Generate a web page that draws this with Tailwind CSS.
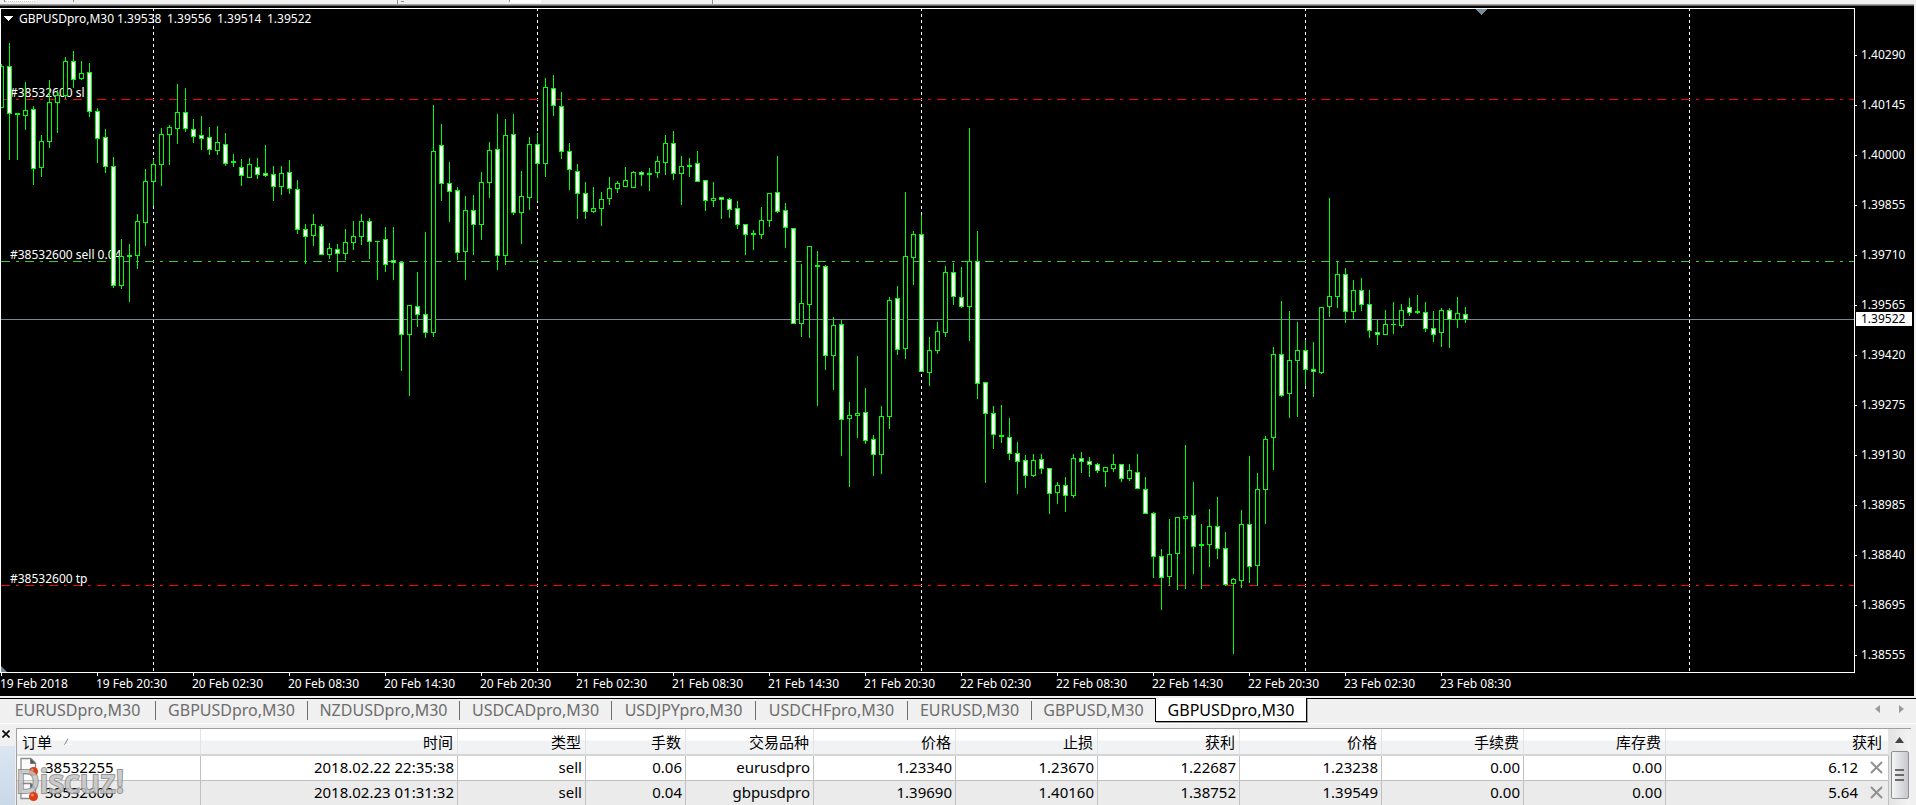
<!DOCTYPE html>
<html lang="zh-CN">
<head>
<meta charset="utf-8">
<title>GBPUSDpro,M30</title>
<script src="https://cdn.jsdelivr.net/npm/@tailwindcss/browser@4"></script>
</head>
<body class="flex h-screen flex-col overflow-hidden bg-[#f0f0f0] font-['Noto_Sans','Noto_Sans_CJK_SC',sans-serif] text-black">

<!-- lower edge of the toolbar -->
<div class="flex h-1 shrink-0 items-start bg-[#f0f0f0]">
  <span class="ml-1 h-[2px] w-px bg-[#8c8c8c]"></span>
  <span class="h-[2px] w-[30px] border-b border-dotted border-[#c8c8c8] bg-white"></span>
  <span class="ml-[38px] h-[2px] w-px bg-[#8c8c8c]"></span>
  <span class="ml-[323px] h-1 w-px bg-[#8c8c8c]"></span>
  <span class="mt-px ml-[3px] h-px w-[3px] bg-[#8c8c8c]"></span>
  <span class="ml-[105px] h-[2px] w-px bg-[#8c8c8c]"></span>
  <span class="h-[3px] w-[31px] bg-white"></span>
  <span class="ml-[171px] h-1 w-px bg-[#8c8c8c]"></span>
</div>

<!-- chart window -->
<main class="mr-[2px] flex min-h-0 flex-1 flex-col border-t border-[#a0a0a0] bg-black">
  <div class="h-[3px] shrink-0 border-t border-[#696969]"></div>
  <div class="flex min-h-0 flex-1">
    <section class="relative min-w-0 flex-1 border border-white">
      <svg id="plot" class="absolute inset-0 h-full w-full" shape-rendering="crispEdges" role="img" aria-label="GBPUSDpro M30">
        <g transform="translate(-1 -9)">
          <g id="days" stroke="#fff" stroke-dasharray="3 3"></g>
          <g stroke-dasharray="9 6 3 6">
            <path d="M1 99.500H4000" stroke="#ff0000"/>
            <path d="M1 261.500H4000" stroke="#32cd32"/>
            <path d="M1 585.500H4000" stroke="#ff0000"/>
          </g>
          <path d="M1 319.500H4000" stroke="#778899"/>
          <g class="text-[12px]" fill="#fff">
            <text x="10" y="97">#38532600 sl</text>
            <text x="10" y="259">#38532600 sell 0.04</text>
            <text x="10" y="583">#38532600 tp</text>
            <text x="19" y="23">GBPUSDpro,M30</text>
            <text x="117" y="23">1.39538</text>
            <text x="167" y="23">1.39556</text>
            <text x="217" y="23">1.39514</text>
            <text x="267" y="23">1.39522</text>
          </g>
          <g id="candles"></g>
          <path d="M4 16H13L8.500 21Z" fill="#fff"/>
          <path d="M1476 9H1487L1481.500 15Z" fill="#778899"/>
        </g>
      </svg>
      <svg class="absolute bottom-0 left-0 h-[6px] w-[6px]" viewBox="0 0 6 6"><path d="M0 0L6 6H0Z" fill="#778899"/></svg>
    </section>
    <aside class="relative w-[59px] shrink-0 overflow-hidden text-[12px] leading-[16px] text-white">
      <ol id="prices" class="mt-[22px]"></ol>
      <div class="absolute top-[304px] left-px h-[14px] w-[56px] bg-white pl-[5px] leading-[14px] text-black">1.39522</div>
    </aside>
  </div>
  <ol id="times" class="flex h-[23px] shrink-0 overflow-hidden text-[12px] leading-[16px] text-white"></ol>
</main>

<!-- chart tabs -->
<nav class="flex h-7 shrink-0 border-b border-white bg-[#f0f0f0] pt-[2px]">
  <div class="flex flex-1 items-start border-t border-black text-[16px] leading-[22px] text-[#6d6d6d]">
    <button class="mt-[2px] h-[19px] w-[156px] border-r border-[#6d6d6d] leading-[19px]">EURUSDpro,M30</button>
    <button class="mt-[2px] h-[19px] w-[152px] border-r border-[#6d6d6d] leading-[19px]">GBPUSDpro,M30</button>
    <button class="mt-[2px] h-[19px] w-[152px] border-r border-[#6d6d6d] leading-[19px]">NZDUSDpro,M30</button>
    <button class="mt-[2px] h-[19px] w-[152px] border-r border-[#6d6d6d] leading-[19px]">USDCADpro,M30</button>
    <button class="mt-[2px] h-[19px] w-[144px] border-r border-[#6d6d6d] leading-[19px]">USDJPYpro,M30</button>
    <button class="mt-[2px] h-[19px] w-[152px] border-r border-[#6d6d6d] leading-[19px]">USDCHFpro,M30</button>
    <button class="mt-[2px] h-[19px] w-[124px] border-r border-[#6d6d6d] leading-[19px]">EURUSD,M30</button>
    <button class="mt-[2px] h-[19px] w-[123px] leading-[19px]">GBPUSD,M30</button>
    <button class="-mt-px h-[24px] w-[152px] border-x border-b border-black bg-white leading-[24px] text-black shadow-[1px_1px_0_#a0a0a0]">GBPUSDpro,M30</button>
    <div class="ml-auto flex gap-[19px] pt-[6px] pr-[12px]">
      <button aria-label="向左"><svg class="h-2 w-[5px]" viewBox="0 0 5 8"><path d="M5 0V8L0 4Z" fill="#9a9a9a"/></svg></button>
      <button aria-label="向右"><svg class="h-2 w-[5px]" viewBox="0 0 5 8"><path d="M0 0V8L5 4Z" fill="#9a9a9a"/></svg></button>
    </div>
  </div>
</nav>

<!-- terminal -->
<section class="relative flex h-[81px] shrink-0 overflow-hidden pt-1 pr-[5px]">
  <div class="flex w-4 shrink-0 flex-col">
    <button aria-label="关闭" class="flex h-[18px] items-center pl-[2px]"><svg class="mt-[-6px] h-[8px] w-[8px]" viewBox="0 0 8 8"><path d="M.5.5L7.500 7.500M7.500.5L.5 7.500" stroke="#000" stroke-width="1.600"/></svg></button>
    <div class="w-[15px] flex-1 bg-linear-to-b from-[#dbe6f3] to-[#c9d8e8]"></div>
  </div>
  <div class="flex min-w-0 flex-1 border-t border-l border-[#a0a0a0] bg-white">
    <div class="min-w-0 flex-1">
      <table class="w-full table-fixed border-separate border-spacing-0 text-right text-[15px] leading-[20px]">
        <colgroup><col class="w-[184px]"><col class="w-[257px]"><col class="w-[128px]"><col class="w-[100px]"><col class="w-[128px]"><col class="w-[142px]"><col class="w-[142px]"><col class="w-[142px]"><col class="w-[142px]"><col class="w-[142px]"><col class="w-[142px]"><col></colgroup>
        <thead>
          <tr class="h-[27px] bg-linear-to-b from-white from-40% to-[#f1f2f4] to-45% [&>th]:border-r [&>th]:border-b-[2px] [&>th]:border-r-[#e2e3e5] [&>th]:border-b-[#d5d5d5] [&>th]:p-0 [&>th]:pr-1 [&>th]:font-normal">
            <th scope="col"><span class="flex items-center gap-3 pl-[5px]">订单<svg class="h-[7px] w-[8px]" viewBox="0 0 8 7"><path d="M.5 7L4 .5" stroke="#888" fill="none"/><path d="M4 .5L7.500 6.500H1" stroke="#fff" fill="none"/></svg></span></th>
            <th scope="col">时间</th><th scope="col">类型</th><th scope="col">手数</th><th scope="col">交易品种</th><th scope="col">价格</th><th scope="col">止损</th><th scope="col">获利</th><th scope="col">价格</th><th scope="col">手续费</th><th scope="col">库存费</th><th scope="col"><span class="pr-[2px]">获利</span></th>
          </tr>
        </thead>
        <tbody id="orders" class="[&_td]:h-[25px] [&_td]:border-r [&_td]:border-b [&_td]:border-[#c0c0c0] [&_td]:p-0 [&_td]:pr-[3px] [&_td]:pb-[2px]"></tbody>
      </table>
    </div>
    <div class="flex w-[22px] shrink-0 flex-col items-center border-r border-[#f0f0f0] bg-linear-to-r from-[#e3e3e3] to-[#f3f3f3]">
      <button aria-label="向上滚动" class="flex h-[22px] items-center"><svg class="h-[6px] w-[9px]" viewBox="0 0 9 6"><path d="M0 6L4.500 0L9 6Z" fill="#444"/></svg></button>
      <div class="flex h-[48px] w-[18px] flex-col items-center justify-center gap-[3px] rounded-[2px] border border-[#8f8f8f] bg-linear-to-r from-[#f5f5f5] to-[#c6c8cc]">
        <span class="h-[2px] w-[9px] bg-[#6a6a6a]"></span><span class="h-[2px] w-[9px] bg-[#6a6a6a]"></span><span class="h-[2px] w-[9px] bg-[#6a6a6a]"></span>
      </div>
    </div>
  </div>
  <svg class="pointer-events-none absolute bottom-0 left-[14px] h-[44px] w-[120px] overflow-visible opacity-85" aria-label="Discuz!">
    <text x="2" y="32" class="font-['Open_Sans',sans-serif] text-[32px] font-semibold" fill="#c4c4c4" stroke="#858585" stroke-width="2" paint-order="stroke">Discuz!</text>
  </svg>
</section>

<template id="order-icon">
  <svg class="h-[20px] w-[20px]" viewBox="0 0 20 20"><path d="M2 1.500H12L16.500 6V16.500H2Z" fill="#fbfbfb" stroke="#8b8b8b" stroke-width="1.300"/><path d="M11.500 1.500V6.500H16.500Z" fill="#555" stroke="#777"/><circle cx="14.500" cy="14.500" r="4.500" fill="#dd3c14"/><circle cx="13.300" cy="13" r="1.500" fill="#f58b64"/></svg>
</template>
<template id="delete-icon">
  <svg class="h-[13px] w-[13px]" viewBox="0 0 13 13"><path d="M1 1L12 12M12 1L1 12" stroke="#909090" stroke-width="2"/></svg>
</template>

<script>
// One row per bar, 8px apart: high, body top, body bottom, low, 1 = falling bar.
const bars = [
[64,66,108,108,0],[43,66,114,160,1],[113,113,115,160,1],[82,110,116,130,0],[106,109,169,185,1],[135,141,168,177,0],[80,102,142,148,0],[90,95,103,133,0],[57,61,96,99,0],[51,61,80,88,1],
[61,73,79,80,0],[63,72,112,117,1],[108,111,139,163,1],[129,137,167,173,1],[157,166,286,288,1],[239,256,286,289,0],[244,255,257,302,1],[214,221,256,269,0],[169,181,223,246,0],[159,164,182,206,0],
[128,134,165,186,0],[125,127,135,165,0],[84,112,129,144,0],[88,112,129,132,1],[119,129,137,143,1],[116,135,139,150,1],[127,137,150,155,1],[126,142,151,155,0],[133,144,164,166,1],[154,161,163,167,1],
[159,167,176,186,1],[158,164,178,178,0],[158,167,175,179,1],[145,173,176,177,1],[166,174,187,201,1],[166,173,187,195,0],[160,172,189,194,1],[180,189,230,234,1],[224,229,237,264,1],[214,224,236,246,0],
[224,226,255,255,1],[243,248,255,259,0],[244,249,254,272,1],[229,242,254,260,0],[221,236,243,250,0],[214,221,237,245,0],[218,221,242,259,1],[241,241,242,280,1],[227,239,265,272,1],[227,260,263,280,1],
[262,262,335,371,1],[305,305,335,396,0],[272,306,315,327,1],[232,314,333,338,1],[105,151,333,337,0],[124,145,184,201,1],[162,183,192,222,1],[187,190,253,260,1],[196,210,252,280,0],[195,210,225,255,1],
[172,182,225,240,0],[142,150,183,198,0],[114,149,256,270,1],[119,135,256,265,0],[114,134,213,215,1],[171,196,213,244,0],[137,144,198,210,0],[133,144,164,201,1],[78,87,164,177,0],[75,88,106,116,1],
[92,106,152,159,1],[143,151,170,190,1],[164,171,194,219,1],[182,193,212,219,1],[187,208,212,213,0],[192,199,209,226,0],[177,188,199,205,0],[181,183,189,193,0],[167,180,187,187,0],[171,172,188,188,0],
[171,172,175,186,1],[168,173,175,191,1],[156,161,173,178,0],[135,143,163,175,0],[131,143,174,180,1],[156,166,174,205,0],[158,165,167,177,1],[151,163,182,182,1],[180,180,201,211,1],[182,198,201,207,0],
[197,197,200,219,1],[198,199,210,218,1],[201,208,225,229,1],[224,224,235,255,1],[230,233,235,250,1],[207,220,235,239,0],[193,193,221,227,0],[156,192,212,213,1],[203,210,228,248,1],[228,228,324,324,1],
[264,303,324,337,0],[246,246,305,338,0],[251,265,267,406,1],[265,266,356,370,1],[317,325,356,390,0],[320,324,420,456,1],[402,415,419,487,0],[356,413,416,438,0],[388,412,441,444,1],[435,439,455,476,1],
[406,416,455,474,0],[297,300,417,429,0],[286,298,350,355,1],[192,256,349,359,0],[231,234,258,285,0],[215,234,372,372,1],[337,350,373,386,0],[322,331,351,354,0],[266,272,333,337,0],[263,272,297,305,1],
[267,297,307,308,1],[128,261,307,341,0],[231,261,384,399,1],[382,382,414,483,1],[406,413,435,449,1],[405,435,437,443,1],[418,437,454,460,1],[442,453,462,494,1],[455,460,476,488,1],[454,460,476,477,0],
[454,459,469,474,1],[468,468,494,514,1],[482,485,493,504,0],[477,485,496,512,1],[454,458,496,498,0],[452,458,462,473,1],[457,461,465,477,1],[463,464,471,473,1],[467,467,472,487,0],[454,464,469,472,0],
[464,464,479,482,1],[464,470,479,481,0],[454,472,489,489,1],[477,489,514,514,1],[512,513,557,578,1],[549,556,578,610,1],[519,554,577,586,0],[517,517,554,590,0],[445,516,519,589,0],[482,515,547,574,1],
[524,544,546,589,1],[509,526,545,567,0],[497,526,549,559,1],[532,548,585,586,1],[578,579,584,654,0],[510,524,581,588,0],[456,524,567,583,1],[473,489,566,586,0],[436,439,490,524,0],[347,354,438,470,0],
[301,354,396,397,1],[311,360,394,418,0],[322,350,361,417,0],[340,350,370,386,1],[342,369,372,397,1],[307,307,373,374,0],[198,296,307,317,0],[261,274,297,308,0],[268,274,312,323,1],[280,290,312,320,0],
[278,290,305,311,1],[290,304,331,338,1],[320,332,335,345,1],[310,324,335,335,0],[302,324,325,334,1],[304,310,326,328,0],[298,307,313,316,1],[295,311,313,314,1],[302,312,329,332,1],[311,328,335,342,1],
[308,310,333,347,0],[308,310,320,348,1],[297,313,320,328,0],[307,314,320,323,1]];
document.getElementById('candles').innerHTML = bars.map(([hi, top, bot, lo, down], i) => {
  const x = 1 + 8 * i;
  const inner = bot - top > 2 ? `<rect x="${x - 1}" y="${top + 1}" width="3" height="${bot - top - 2}" fill="${down ? '#fff' : '#000'}"/>` : '';
  return `<rect x="${x}" y="${hi}" width="1" height="${lo - hi}" fill="#0f0"/><rect x="${x - 2}" y="${top}" width="5" height="${bot - top}" fill="#0f0"/>${inner}`;
}).join('');
document.getElementById('days').innerHTML = [153, 537, 921, 1305, 1689].map(x => `<path d="M${x + 0.5} 8V3000"/>`).join('');
document.getElementById('prices').innerHTML = ['1.40290','1.40145','1.40000','1.39855','1.39710','1.39565','1.39420','1.39275','1.39130','1.38985','1.38840','1.38695','1.38555']
  .map(p => `<li class="flex h-[50px] items-center"><span class="mr-1 h-px w-[2px] bg-white"></span>${p}</li>`).join('');
document.getElementById('times').innerHTML = ['19 Feb 2018','19 Feb 20:30','20 Feb 02:30','20 Feb 08:30','20 Feb 14:30','20 Feb 20:30','21 Feb 02:30','21 Feb 08:30','21 Feb 14:30','21 Feb 20:30','22 Feb 02:30','22 Feb 08:30','22 Feb 14:30','22 Feb 20:30','23 Feb 02:30','23 Feb 08:30']
  .map(t => `<li class="w-[96px] shrink-0"><span class="ml-px block h-[3px] w-px bg-white"></span>${t}</li>`).join('');
const icon = id => document.getElementById(id).innerHTML;
document.getElementById('orders').innerHTML = [
  ['38532255','2018.02.22 22:35:38','sell','0.06','eurusdpro','1.23340','1.23670','1.22687','1.23238','0.00','0.00','6.12'],
  ['38532600','2018.02.23 01:31:32','sell','0.04','gbpusdpro','1.39690','1.40160','1.38752','1.39549','0.00','0.00','5.64']
].map((r, n) => `<tr class="${n ? 'bg-[#ebebeb]' : 'bg-white'}">` + r.map((c, i) =>
  i === 0 ? `<td><span class="flex items-center gap-[6px] pl-[2px]">${icon('order-icon')}${c}</span></td>`
  : i === 11 ? `<td><span class="flex items-center justify-end gap-[12px] pr-[2px]">${c}<button aria-label="平仓">${icon('delete-icon')}</button></span></td>`
  : `<td>${c}</td>`).join('') + '</tr>').join('');
</script>
</body>
</html>
